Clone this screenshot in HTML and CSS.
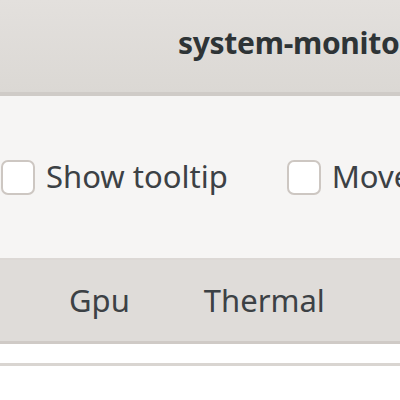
FILE: index.html
```html
<!DOCTYPE html>
<html lang="en">
<head>
  <meta charset="UTF-8">
  <title>system-monitor</title>
  <link rel="stylesheet" href="styles.css">
</head>
<body>
  <div class="window">
    <!-- title bar -->
    <div class="headerbar">
      <div class="title">system-monitor-applet preferences</div>
    </div>

    <!-- options -->
    <div class="prefs">
      <label class="check">
        <span class="box"></span>
        <span class="check-label">Show tooltip</span>
      </label>
      <label class="check">
        <span class="box"></span>
        <span class="check-label">Move clock</span>
      </label>
    </div>

    <!-- notebook tabs -->
    <div class="tabs">
      <div class="tab">Gpu</div>
      <div class="tab">Thermal</div>
    </div>

    <div class="page">
      <div class="page-row"></div>
    </div>
  </div>
</body>
</html>
```

FILE: styles.css
```css
* {
  box-sizing: border-box;
}

body {
  margin: 0;
  padding: 0;
  width: 400px;
  height: 400px;
  overflow: hidden;
  font-family: "Noto Sans", "Open Sans", sans-serif;
  font-size: 31px;
  color: #2e3436;
  background: #ffffff;
}

.window {
  display: flex;
  flex-direction: column;
  width: 400px;
}

.headerbar {
  height: 96px;
  display: flex;
  align-items: center;
  padding-left: 178px;
  background: linear-gradient(#e3e0dd, #dbd8d4);
  border-bottom: 4px solid #cfcbc7;
  overflow: hidden;
}

.title {
  font-weight: bold;
  font-size: 30px;
  letter-spacing: -0.3px;
  white-space: nowrap;
  padding-bottom: 8px;
}

.prefs {
  height: 164px;
  display: flex;
  align-items: center;
  gap: 59px;
  padding-left: 1px;
  background: #f6f5f4;
  border-bottom: 2px solid #dcd8d5;
  white-space: nowrap;
  overflow: hidden;
}

.check {
  display: flex;
  align-items: center;
  gap: 11px;
}

.box {
  width: 34px;
  height: 35px;
  background: #ffffff;
  border: 2px solid #cdc7c2;
  border-radius: 7px;
  flex-shrink: 0;
}

.check-label {
  color: #3c4145;
  padding-bottom: 2px;
}

.tabs {
  height: 84px;
  display: flex;
  align-items: center;
  gap: 74px;
  padding-left: 69px;
  background: #dfdcd9;
  border-bottom: 3px solid #cfcac6;
}

.tab {
  color: #3c4145;
  padding-bottom: 2px;
}

.page {
  background: #ffffff;
  padding-top: 19px;
}

.page-row {
  height: 3px;
  background: #d9d5d1;
}
```
